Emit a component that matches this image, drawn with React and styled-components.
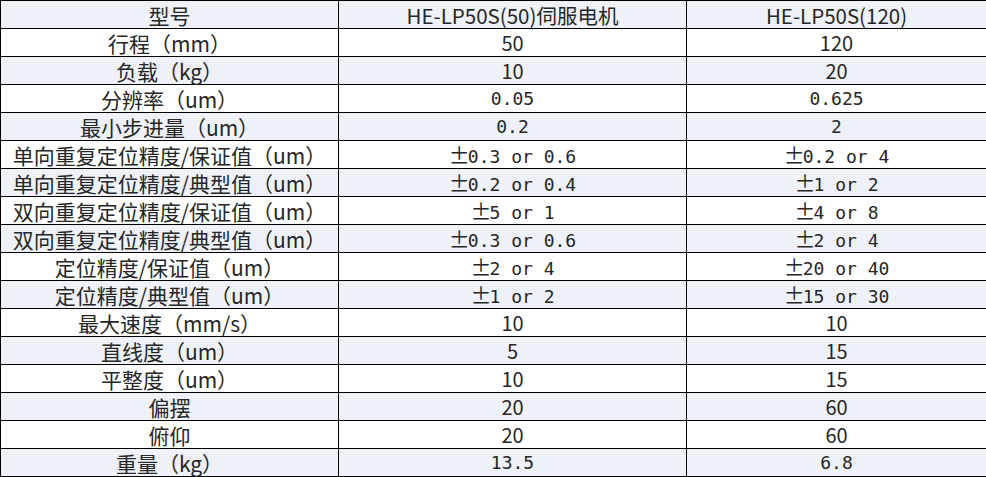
import React from 'react';
import styled, { createGlobalStyle } from 'styled-components';

const GlobalStyle = createGlobalStyle`
  html, body {
    margin: 0;
    padding: 0;
    background: #fff;
  }
`;

const Table = styled.table`
  width: 986px;
  table-layout: fixed;
  border-collapse: collapse;
  font-family: "Noto Sans CJK SC", "Noto Sans", sans-serif;
  color: #262626;
`;

const Row = styled.tr`
  height: 28px;
  background: ${(p) => (p.shaded ? '#eef2f8' : '#fff')};
`;

const Cell = styled.td`
  border: 1px solid #000;
  padding: 0;
  height: 27px;
  vertical-align: middle;
`;

const CellInner = styled.div`
  height: 27px;
  display: flex;
  align-items: center;
  justify-content: center;
  white-space: nowrap;
  font-size: ${(p) => (p.mono ? '18px' : p.head ? '20.5px' : '20px')};
  font-family: ${(p) =>
    p.mono
      ? '"DejaVu Sans Mono", "Noto Sans CJK SC", monospace'
      : '"Noto Sans CJK SC", "Noto Sans", sans-serif'};
`;

const Text = styled.span`
  line-height: 22px;
  padding-top: ${(p) => (p.mono ? '1px' : '0')};
`;

const Label = styled.span`
  font-size: 21px;
  line-height: 24px;
`;

const PlusMinus = styled.span`
  display: inline-block;
  width: 19px;
  text-align: left;
  font-family: "Noto Sans CJK SC", sans-serif;
  font-size: 21px;
  line-height: 22px;
`;

const rows = [
  ['型号', 'HE-LP50S(50)伺服电机', 'HE-LP50S(120)'],
  ['行程（mm）', '50', '120'],
  ['负载（kg）', '10', '20'],
  ['分辨率（um）', '0.05', '0.625', true],
  ['最小步进量（um）', '0.2', '2', true],
  ['单向重复定位精度/保证值（um）', '±0.3 or 0.6', '±0.2 or 4', true],
  ['单向重复定位精度/典型值（um）', '±0.2 or 0.4', '±1 or 2', true],
  ['双向重复定位精度/保证值（um）', '±5 or 1', '±4 or 8', true],
  ['双向重复定位精度/典型值（um）', '±0.3 or 0.6', '±2 or 4', true],
  ['定位精度/保证值（um）', '±2 or 4', '±20 or 40', true],
  ['定位精度/典型值（um）', '±1 or 2', '±15 or 30', true],
  ['最大速度（mm/s）', '10', '10'],
  ['直线度（um）', '5', '15'],
  ['平整度（um）', '10', '15'],
  ['偏摆', '20', '60'],
  ['俯仰', '20', '60'],
  ['重量（kg）', '13.5', '6.8', true],
];

const Value = ({ text, mono }) => (
  <Text mono={mono}>
    {text.startsWith('±') ? (
      <>
        <PlusMinus>±</PlusMinus>
        {text.slice(1)}
      </>
    ) : (
      text
    )}
  </Text>
);

export default function App() {
  return (
    <>
      <GlobalStyle />
      <Table>
        <colgroup>
          <col style={{ width: 338 }} />
          <col style={{ width: 348 }} />
          <col style={{ width: 300 }} />
        </colgroup>
        <tbody>
          {rows.map(([label, a, b, mono], i) => (
            <Row key={label} shaded={i % 2 === 0}>
              <Cell>
                <CellInner>
                  <Label>{label}</Label>
                </CellInner>
              </Cell>
              <Cell>
                <CellInner mono={mono} head={i === 0}>
                  <Value text={a} mono={mono} />
                </CellInner>
              </Cell>
              <Cell>
                <CellInner mono={mono} head={i === 0}>
                  <Value text={b} mono={mono} />
                </CellInner>
              </Cell>
            </Row>
          ))}
        </tbody>
      </Table>
    </>
  );
}
